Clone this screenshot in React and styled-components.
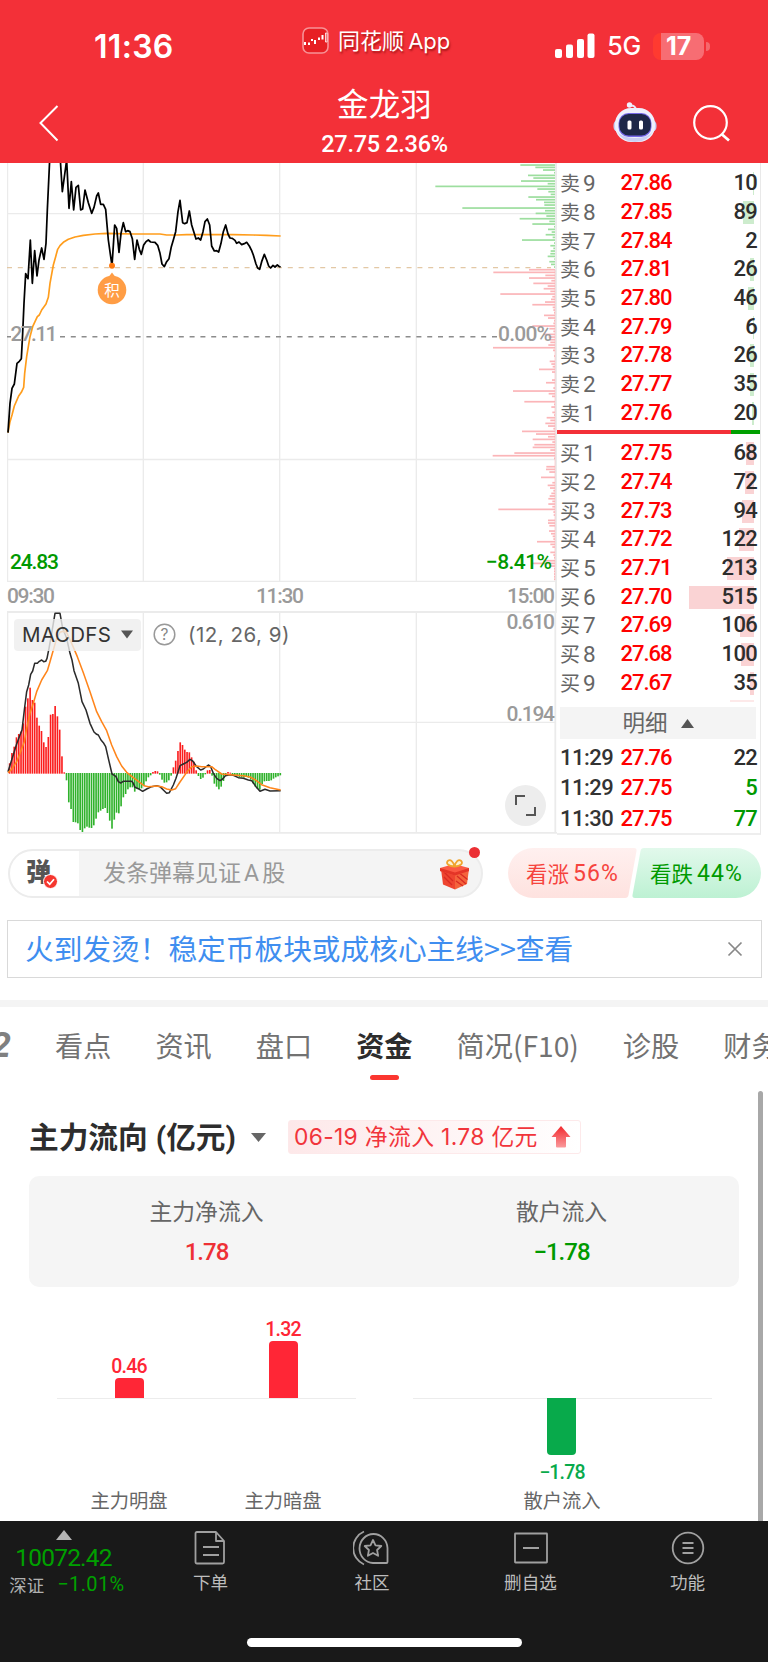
import React from "react";
import styled, { createGlobalStyle } from "styled-components";

const NUM = `Roboto, "Noto Sans CJK SC", sans-serif`;
const UI = `Inter, "Noto Sans CJK SC", sans-serif`;

const Global = createGlobalStyle`
  * { box-sizing: border-box; }
  body { margin: 0; background: #fff; font-family: ${NUM}; color: #333; }
  svg { display: block; flex: none; }
`;

const Page = styled.div`
  width: 768px;
  height: 1662px;
  overflow: hidden;
  display: flex;
  flex-direction: column;
  background: #fff;
  white-space: nowrap;
`;

/* ---------- header ---------- */
const Header = styled.header`
  height: 163px;
  flex: none;
  background: #f33038;
  color: #fff;
  display: flex;
  flex-direction: column;
`;
const StatusBar = styled.div`
  height: 82px;
  padding: 6px 58px 0 94px;
  display: grid;
  grid-template-columns: 207px 1fr auto;
  align-items: center;
`;
const Clock = styled.span`
  font: 600 32px/40px ${UI};
  letter-spacing: 0.3px;
  padding-top: 6px;
`;
const AppTag = styled.div`
  display: flex;
  align-items: center;
  gap: 9px;
  font: 400 22px/30px ${UI};
  word-spacing: -2px;
  padding: 0 0 7px 1px;
  text-shadow: 1px 2px 2px rgba(110, 0, 0, 0.55);
`;
const Signals = styled.div`
  display: flex;
  align-items: center;
  font: 500 25px/30px ${UI};
  padding-top: 4px;
`;
const Network = styled.span`
  margin: 0 12px 0 12px;
  font-weight: 500;
  letter-spacing: -0.2px;
`;
const Battery = styled.div`
  width: 51px;
  height: 27px;
  border-radius: 8px;
  background: linear-gradient(90deg, #ff3a30 0 8px, #f76d73 8px);
  font: 700 25px/26px ${UI};
  padding-left: 13px;
`;
const BatteryTip = styled.i`
  width: 4px;
  height: 9px;
  margin-left: 2px;
  border-radius: 0 5px 5px 0;
  background: #f5686d;
`;
const TitleBar = styled.div`
  height: 81px;
  display: grid;
  grid-template-columns: 240px 1fr 240px;
  padding: 0 37px 0 38px;
`;
const Back = styled.div`padding-top: 22px;`;
const StockTitle = styled.div`
  text-align: center;
  font: 400 31.5px/42px ${NUM};
  padding-top: 3px;
  letter-spacing: 0.2px;
`;
const StockQuote = styled.div`
  font: 500 23.5px/34px ${NUM};
  letter-spacing: -0.3px;
`;
const Tools = styled.div`
  display: flex;
  justify-content: flex-end;
  gap: 36px;
  padding-top: 19px;
`;

/* ---------- charts and order book ---------- */
const Market = styled.section`
  height: 671px;
  flex: none;
  padding: 0 7px;
  display: grid;
  grid-template-columns: 550px 204px;
`;
const Charts = styled.div`
  display: flex;
  flex-direction: column;
`;
const Indicator = styled.div`
  position: relative;
`;
const IndicatorBar = styled.div`
  position: absolute;
  left: 7px;
  top: 7px;
  display: flex;
  align-items: center;
  font: 400 20.5px/33px ${UI};
  color: #666;
`;
const Chip = styled.div`
  width: 127px;
  height: 32px;
  padding-left: 8px;
  display: flex;
  align-items: center;
  gap: 10px;
  border-radius: 4px;
  background: rgba(238, 238, 238, 0.8);
  color: #333;
  letter-spacing: 0.4px;
  margin-right: 12px;
`;
const Params = styled.span`
  margin-left: 12px;
  letter-spacing: 0.5px;
`;
const Expand = styled.div`
  position: absolute;
  right: 11px;
  bottom: 8px;
  width: 41px;
  height: 41px;
  border-radius: 50%;
  background: #ededed;
  display: grid;
  place-items: center;
`;
const Book = styled.div`
  display: flex;
  flex-direction: column;
  border-right: 1px solid #e9e9e9;
  border-bottom: 2px solid #eee;
`;
const Levels = styled.div`
  padding-top: ${(p) => p.$top}px;
  height: ${(p) => p.$h}px;
  flex: none;
`;
const NextLevel = styled.div`
  width: 24px;
  height: 2px;
  margin: 3px 6px 0 auto;
  background: #fde9e9;
`;
const Level = styled.div`
  height: 28.67px;
  display: grid;
  grid-template-columns: 60.5px 70px 1fr;
  align-items: center;
  padding-left: 3px;
  padding-right: 3px;
  font: 500 22px/28px ${NUM};
`;
const Side = styled.span`
  display: flex;
  gap: 3px;
  align-items: center;
  color: #666;
  font: 400 20px/26px "Noto Sans CJK SC", sans-serif;
  b { font: 400 22.5px/28px ${NUM}; }
`;
const Price = styled.span`
  color: #ff0000;
  letter-spacing: -1px;
`;
const Qty = styled.span`
  position: relative;
  text-align: right;
  letter-spacing: -0.7px;
  color: ${(p) => p.$c || "#2d2d2d"};
`;
const QtyText = styled.span`position: relative;`;
const QtyBar = styled.i`
  position: absolute;
  right: 3px;
  top: 3px;
  height: 23px;
  background: ${(p) => (p.$buy ? "#fad3d4" : "#cdeccd")};
`;
const Ratio = styled.div`
  height: 4px;
  flex: none;
  background: linear-gradient(90deg, #f33038 0 174px, #00a000 174px);
`;
const Detail = styled.div`
  height: 32px;
  flex: none;
  margin: 0 4px 0 3px;
  background: #f4f4f4;
  color: #666;
  font: 400 22.5px/32px ${NUM};
  display: flex;
  justify-content: center;
  align-items: center;
  gap: 13px;
`;
const Trade = styled(Level)`
  height: 30.3px;
`;
const TradeTime = styled.span`letter-spacing: -0.5px;`;

/* ---------- comments and vote ---------- */
const Social = styled.section`
  height: 50px;
  flex: none;
  margin: 14px 7px 0 8px;
  display: flex;
  justify-content: space-between;
`;
const Barrage = styled.div`
  position: relative;
  width: 475px;
  height: 49px;
  margin-top: 1px;
  border: 2px solid #ececec;
  border-radius: 25px;
  background: linear-gradient(90deg, #fff 0 69px, #f4f4f4 69px);
  display: flex;
  align-items: center;
  color: #999;
  font: 400 23px/45px ${NUM};
  word-spacing: -2.6px;
`;
const BarrageLogo = styled.div`
  position: relative;
  width: 93px;
  height: 45px;
  padding-left: 16px;
  color: #555;
  font: 900 25px/39px "Noto Sans CJK SC", sans-serif;
  svg { position: absolute; left: 33px; top: 23px; }
`;
const Gift = styled.div`
  position: absolute;
  right: 10px;
  top: 7px;
`;
const Dot = styled.i`
  position: absolute;
  right: 1px;
  top: -4px;
  width: 11px;
  height: 11px;
  border-radius: 50%;
  background: #eb2f34;
`;
const Vote = styled.div`
  position: relative;
  width: 253px;
  display: flex;
`;
const VoteShape = styled.svg`
  position: absolute;
  inset: 0;
`;
const VoteSide = styled.span`
  position: relative;
  flex: none;
  width: ${(p) => p.$w}px;
  padding-left: 18px;
  display: flex;
  gap: 4px;
  font: 400 21.5px/49px "Noto Sans CJK SC", sans-serif;
  color: ${(p) => p.$c};
  b { font: 400 23px/52px ${NUM}; letter-spacing: 1.1px; }
`;

/* ---------- news ---------- */
const News = styled.section`
  height: 58px;
  flex: none;
  margin: 22px 6px 0 7px;
  padding: 0 18px 2px 17px;
  border: 1px solid #d9d9d9;
  display: flex;
  justify-content: space-between;
  align-items: center;
  color: #3f8ef0;
  font: 400 28.7px/52px "Noto Sans CJK SC", sans-serif;
  svg { margin-top: 2px; }
`;
const Band = styled.div`
  height: 7px;
  flex: none;
  margin-top: 22px;
  background: #f4f4f4;
`;

/* ---------- tabs ---------- */
const Tabs = styled.nav`
  height: 81px;
  flex: none;
  display: flex;
  margin-left: -13px;
  padding-top: 19px;
  gap: 44px;
  overflow: hidden;
`;
const Tab = styled.span`
  flex: none;
  font: ${(p) => (p.$on ? 700 : 400)} 28.2px/38px "Noto Sans CJK SC", sans-serif;
  color: ${(p) => (p.$on ? "#2d2d2d" : "#727272")};
  display: flex;
  flex-direction: column;
  align-items: center;
  &::after {
    content: "";
    margin-top: 11px;
    width: 29px;
    height: 5px;
    border-radius: 3px;
    background: ${(p) => (p.$on ? "#fb362f" : "transparent")};
  }
`;
const TabMark = styled(Tab)`
  width: 24px;
  align-items: flex-end;
  font: italic 700 34px/38px Inter, sans-serif;
  color: #808080;
  &::after { width: 0; }
`;

/* ---------- capital flow ---------- */
const Flow = styled.section`
  position: relative;
  height: 433px;
  flex: none;
  padding: 28px 29px 0;
`;
const Scroll = styled.i`
  position: absolute;
  right: 5px;
  top: 3px;
  bottom: 0;
  width: 5px;
  border-radius: 3px 3px 0 0;
  background: #a8a8a8;
`;
const FlowHead = styled.div`
  height: 42px;
  display: flex;
  align-items: center;
  font: 700 29.7px/43px ${NUM};
  color: #2d2d2d;
`;
const Unit = styled.span`margin-left: 8px;`;
const FlowTag = styled.div`
  display: flex;
  align-items: center;
  width: 293px;
  height: 34px;
  padding-left: 5px;
  padding-right: 9px;
  justify-content: space-between;
  border: 1px solid #fde9ea;
  border-radius: 3px;
  background: linear-gradient(90deg, #fde8e9, #fff);
  color: #f1343b;
  font: 400 22.8px/32px ${UI};
  letter-spacing: 0.35px;
`;
const Summary = styled.div`
  height: 111px;
  margin-top: 18px;
  border-radius: 10px;
  background: #f5f5f5;
  display: grid;
  grid-template-columns: 1fr 1fr;
  text-align: center;
  padding-top: 20px;
`;
const SumLabel = styled.div`
  color: #666;
  font: 400 22.8px/33px ${NUM};
`;
const SumValue = styled.div`
  margin-top: 7px;
  font: 500 24px/32px ${NUM};
  letter-spacing: -1px;
  color: ${(p) => p.$c};
`;
const FlowCharts = styled.div`
  display: flex;
  justify-content: space-between;
  padding: 0 27.5px;
`;
const BarGroup = styled.div`
  width: 299px;
  display: flex;
  justify-content: center;
  gap: ${(p) => p.$gap || 0}px;
  background: linear-gradient(#ececec, #ececec) 0 111px / 100% 1px no-repeat;
`;
const BarItem = styled.div`
  width: 80px;
  height: 228px;
  display: grid;
  grid-template-rows: 111px 87px 30px;
  justify-items: center;
  color: #666;
  font: 400 19.3px/30px "Noto Sans CJK SC", sans-serif;
`;
const Half = styled.div`
  display: flex;
  flex-direction: column;
  align-items: center;
  justify-content: ${(p) => (p.$up ? "flex-end" : "flex-start")};
`;
const FlowBar = styled.i`
  width: 29px;
  border-radius: ${(p) => (p.$up ? "4px 4px 0 0" : "0 0 4px 4px")};
  background: ${(p) => (p.$up ? "#ff2636" : "#08aa4b")};
`;
const BarValue = styled.span`
  font: 500 19.5px/24px ${NUM};
  letter-spacing: -0.8px;
  margin: ${(p) => (p.$up ? "0 0 -1px" : "6px 0 0")};
  color: ${(p) => (p.$up ? "#ff2636" : "#08aa4b")};
`;

/* ---------- footer ---------- */
const Footer = styled.footer`
  flex: 1;
  background: #191919;
  display: flex;
  flex-direction: column;
  align-items: center;
`;
const NavRow = styled.div`
  height: 117px;
  width: 768px;
  padding-top: 9px;
  display: grid;
  grid-template-columns: 131px 159px 164px 153px 161px;
`;
const Index = styled.div`
  display: flex;
  flex-direction: column;
  align-items: center;
  padding-right: 4px;
  color: #00a000;
  font: 400 24.5px/26px ${NUM};
`;
const IndexValue = styled.span`
  margin-top: 5px;
  letter-spacing: -0.8px;
`;
const IndexLine = styled.span`
  display: flex;
  gap: 13px;
  margin: 0 -7px 0 0;
  font: 400 20px/26px ${NUM};
  letter-spacing: 0.4px;
  em { font: 400 17.4px/28px "Noto Sans CJK SC", sans-serif; letter-spacing: 0; color: #b0b0b0; }
`;
const NavItem = styled.div`
  display: flex;
  flex-direction: column;
  align-items: center;
  gap: 3px;
  color: #bdbdbd;
  font: 400 17.6px/26px "Noto Sans CJK SC", sans-serif;
`;
const Home = styled.i`
  width: 275px;
  height: 9px;
  border-radius: 5px;
  background: #fff;
`;

/* ---------- data ---------- */
const SELL = [["9", "27.86", 10, 1], ["8", "27.85", 89, 11], ["7", "27.84", 2, 0], ["6", "27.81", 26, 4], ["5", "27.80", 46, 6], ["4", "27.79", 6, 1], ["3", "27.78", 26, 4], ["2", "27.77", 35, 4], ["1", "27.76", 20, 2]];
const BUY = [["1", "27.75", 68, 8], ["2", "27.74", 72, 9], ["3", "27.73", 94, 12], ["4", "27.72", 122, 15], ["5", "27.71", 213, 27], ["6", "27.70", 515, 65], ["7", "27.69", 106, 14], ["8", "27.68", 100, 13], ["9", "27.67", 35, 4]];
const TRADES = [["11:29", "27.76", 22, "#2d2d2d"], ["11:29", "27.75", 5, "#009900"], ["11:30", "27.75", 77, "#009900"]];

const PRICE = "24,818 28,760 30,730 36,685 43,672 51,610 58,604 64,596 68,520 72,430 77,341 84,356 91,240 97,370 104,272 111,348 117,300 125,264 132,298 138,250 142,150 149,0 181,0 187,95 200,0 207,145 214,65 221,150 228,82 235,76 242,150 248,147 255,90 265,128 275,160 282,142 290,108 295,99 302,133 310,133 317,148 325,240 336,318 344,195 350,205 357,277 363,220 370,188 377,215 383,212 390,215 397,236 404,298 411,240 418,268 424,283 431,255 438,245 445,240 452,246 465,247 473,256 480,280 486,312 493,320 500,305 507,296 514,260 520,240 527,215 534,155 540,121 548,188 554,191 561,188 568,153 575,195 588,237 595,234 602,240 609,215 615,185 622,177 629,195 635,258 643,273 650,272 656,276 663,250 670,215 677,195 684,222 690,234 697,235 705,241 710,250 717,246 725,254 735,250 740,247 748,258 755,272 760,285 768,312 773,324 779,328 785,305 793,283 800,300 806,318 812,324 819,316 825,321 832,315 838,320 842,321";
const AVG = "24,818 30,785 36,765 43,738 50,722 56,708 64,697 71,682 74,640 80,590 90,530 98,500 105,485 112,470 118,465 125,450 138,432 145,412 150,370 160,315 167,290 173,268 180,257 190,247 205,238 225,231 250,226 285,222 320,220 350,221 400,222 480,222 500,225 530,225 560,224 700,224 760,225 800,226 842,228";
const DEPTH = "15:721 22:766 30:789 38:822 46:744 54:760 63:723 71:803 79:466 87:772 95:805 103:812 111:745 119:768 127:792 135:793 144:547 152:795 160:767 168:799 176:719 184:808 192:757 200:822 208:804 216:815 224:797 232:818 240:726 249:822 257:811 265:820 273:812 281:811 289:803 297:823 305:808 313:813 321:822 329:747 337:640 346:796 354:747 362:814 370:760 378:803 386:791 394:811 402:661 410:817 418:813 426:795 434:757 442:818 450:820 458:822 466:792 474:804 482:822 490:820 498:757 506:808 514:820 523:790 531:806 539:809 547:811 555:805 563:639 571:819 588:822 604:809 612:814 620:818 628:777 636:816 660:816 668:798 684:820 693:699 701:806 709:816 725:733 733:822 741:814 757:817 765:822 773:800 781:811 790:796 798:804 806:820 814:726 822:768 830:804 838:758 846:817 854:763 862:758 870:811 879:703 887:638 895:822 920:799 928:798 936:808 952:783 968:817 976:803 984:810 992:820 1000:814 1008:809 1016:805 1024:817 1032:805 1040:817 1048:655 1056:820 1065:821 1081:804 1089:804 1097:808 1113:807 1121:813 1129:818 1137:820 1145:771 1153:811 1161:817 1177:811 1185:820 1193:822 1202:790 1210:756 1218:812 1226:822 1234:822 1242:822 1250:822 1258:822"
  .split(" ").map((s) => s.split(":").map(Number));
const HIST = [490, 459, 440, 412, 402, 395, 370, 320, 295, 263, 300, 308, 353, 377, 393, 427, 441, 411, 344, 342, 318, 349, 389, 469, 517, 539, 605, 625, 664, 665, 668, 688, 694, 683, 678, 681, 682, 674, 654, 635, 630, 625, 622, 637, 660, 684, 657, 636, 638, 617, 590, 580, 566, 560, 560, 573, 563, 566, 563, 556, 542, 530, 524, 516, 513, 514, 522, 537, 546, 545, 539, 525, 502, 482, 453, 427, 435, 449, 456, 457, 472, 485, 511, 526, 535, 531, 521, 511, 510, 525, 549, 558, 566, 558, 541, 522, 516, 518, 523, 525, 527, 530, 530, 531, 529, 531, 537, 548, 558, 565, 567, 550, 542, 541, 541, 539, 534, 530, 527, 524];
const DIF = "24,515 35,480 50,432 60,405 66,390 73,330 80,275 86,255 92,223 98,213 104,190 112,190 118,184 125,180 131,185 137,184 141,175 147,145 155,100 165,40 180,40 188,85 200,115 210,160 216,180 222,212 235,250 246,305 258,330 270,370 282,396 290,403 295,405 303,420 310,428 317,440 325,475 336,522 343,526 348,530 355,545 362,549 370,544 395,544 400,550 405,562 415,566 428,574 440,567 455,560 470,557 480,560 490,570 500,580 508,578 520,555 528,535 540,497 550,492 560,487 570,478 578,483 590,500 602,510 610,507 625,495 632,500 640,520 650,535 660,542 668,537 676,527 690,524 700,526 715,533 730,535 745,540 755,542 768,560 780,574 795,568 810,573 842,572";
const DEA = "24,518 35,508 50,485 60,460 73,425 80,385 90,340 100,310 110,275 125,240 142,212 150,185 160,150 170,115 180,97 190,94 200,98 215,130 232,170 250,218 270,275 290,335 305,365 320,392 335,435 350,470 365,498 380,517 400,533 420,548 432,557 445,560 470,558 485,560 500,567 515,570 527,566 540,546 560,517 575,500 590,498 605,500 635,500 645,508 665,522 690,524 730,527 750,531 765,539 785,554 810,563 842,570";

const AxisText = styled.text`
  font: 500 21px ${NUM};
  fill: ${(p) => p.$c || "#9a9a9a"};
`;

function PriceChart() {
  return (
    <svg width="550" height="448" viewBox="7 163 550 448">
      <g stroke="#ebebeb" strokeWidth="1.3" fill="none">
        <path d="M143.3 163V581M279.7 163V581M416.3 163V581M7 213.7H555M7 459.5H555M7 581.3H557" />
        <path d="M7.3 163V581" strokeWidth="1.8" />
        <path d="M556 163V611" strokeWidth="2" />
      </g>
      {DEPTH.map(([y, x]) => (
        <rect key={y} x={280 + x / 3} y={160 + y / 3 - 0.8} width={(825 - x) / 3} height="1.7" fill={y < 325 ? "#9dde9f" : "#fbb5b8"} />
      ))}
      <path d="M555 270V580" stroke="#fbb5b8" strokeWidth="0.6" />
      <path d="M7 267.7H551" stroke="#e3c8a5" strokeWidth="1.3" strokeDasharray="5 5.8" />
      <path d="M7 336.7H11M60 336.7H497" stroke="#8c8c8c" strokeWidth="1.4" strokeDasharray="5 5.8" />
      <g transform="translate(0 160) scale(.33333)" fill="none" strokeLinejoin="round">
        <polyline points={AVG} stroke="#ff9d1c" strokeWidth="5" />
        <polyline points={PRICE} stroke="#000" strokeWidth="5.2" />
      </g>
      <circle cx="112" cy="265.8" r="3" fill="#ff7a10" />
      <path d="M112 272.5l3.8 5h-7.6z" fill="#ff9d45" />
      <circle cx="112" cy="290" r="14.3" fill="#ff9d45" />
      <text x="112" y="295.7" textAnchor="middle" fill="#fff" fontSize="15.5" fontFamily="Noto Sans CJK SC, sans-serif">积</text>
      <AxisText x="10.5" y="340.5" textLength="47">27.11</AxisText>
      <AxisText x="498" y="340.5" textLength="54">0.00%</AxisText>
      <AxisText x="10" y="569" textLength="49" $c="#009900">24.83</AxisText>
      <AxisText x="486" y="569" textLength="66" $c="#009900">−8.41%</AxisText>
      <AxisText x="7" y="602.7" textLength="48">09:30</AxisText>
      <AxisText x="256" y="602.7" textLength="48">11:30</AxisText>
      <AxisText x="507" y="602.7" textLength="48">15:00</AxisText>
    </svg>
  );
}

function MacdChart() {
  const step = 812 / (HIST.length - 1);
  return (
    <svg width="550" height="223" viewBox="7 611 550 223">
      <g stroke="#ebebeb" strokeWidth="1.3" fill="none">
        <path d="M143.3 612V833M279.7 612V833M416.3 612V833M7 722.4H555" />
        <path d="M557 612H7.4V832.8H557M555.3 612V833" strokeWidth="1.8" />
      </g>
      <g transform="translate(0 600) scale(.33333)" fill="none" strokeLinejoin="round">
        {HIST.map((v, i) => (
          <rect key={i} x={26.5 + i * step} width="4.9" y={Math.min(v, 519)} height={Math.abs(v - 519) + 2} fill={v < 519 ? "#fb1d1d" : "#2fb22b"} />
        ))}
        <polyline points={DIF} stroke="#2b2b2b" strokeWidth="4.6" />
        <polyline points={DEA} stroke="#ff851b" strokeWidth="4.6" />
      </g>
      <AxisText x="506.5" y="629.3" textLength="48.5">0.610</AxisText>
      <AxisText x="506.5" y="721" textLength="48.5">0.194</AxisText>
    </svg>
  );
}

const AppIcon = () => (
  <svg width="27" height="27" viewBox="0 0 27 27">
    <rect x="1" y="1" width="25" height="25" rx="6" fill="#e71f24" stroke="#f79296" strokeWidth="1.6" />
    <path d="M3 15v3M7 15.5v2.5M10 12v2M13 13v4M17 10.5v2.5M20.500 8v4.500" stroke="#fff" strokeWidth="2" />
    <path d="M23.500 6v9h1.500V6z" fill="none" stroke="#fff" strokeWidth=".8" />
  </svg>
);
const Robot = () => (
  <svg width="44" height="42" viewBox="0 0 44 42">
    <path d="M17 4.500q5-.5 6 4" stroke="#e9eafa" strokeWidth="2" fill="none" />
    <circle cx="16.500" cy="4" r="2.700" fill="#f0f2ff" />
    <rect x="0.500" y="19" width="43" height="12" rx="5" fill="#c8cdf5" />
    <rect x="2" y="7" width="40" height="34" rx="16" fill="#eef0fd" />
    <path d="M4 30q5 11 18 11t18-11q-4 7-18 7T4 30z" fill="#c9cff3" />
    <rect x="5.500" y="12" width="33" height="24" rx="10" fill="#7568e8" />
    <rect x="6.300" y="13" width="31.500" height="21.500" rx="9.500" fill="#1d2748" />
    <rect x="14.500" y="19.500" width="4" height="9" rx="1.500" fill="#fff" />
    <rect x="26" y="19.500" width="4" height="9" rx="1.500" fill="#fff" />
  </svg>
);
const GiftIcon = () => (
  <svg width="32" height="32" viewBox="0 0 32 32">
    <path d="M2 11l14 6v14.500L4 26.500z" fill="#ee4530" />
    <path d="M30 11l-14 6v14.500L28 26z" fill="#f4643c" />
    <path d="M18 18l9 8M17 23l7 5M21 15.500l7.500 6M5 14l9 9M5 19l8 8" stroke="#d92a22" strokeWidth="1.300" />
    <path d="M1 10l14-4 15 4v3l-14 4.500L1 13z" fill="#fb5a44" />
    <path d="M1 10l15 4.500L30 10v3l-14 4.500L1 13z" fill="#e43527" />
    <path d="M15.500 8.500C9 8.500 6.500 5 9 2.800S14.500 4 15.500 8.500zM15.500 8.500c6.500 0 9-3.500 6.500-5.700S16.500 4 15.500 8.500z" fill="#fff3d0" stroke="#f0a52e" strokeWidth="1.800" />
  </svg>
);

const NavIcon = styled.svg.attrs({ width: 38, height: 36, viewBox: "0 0 38 36" })`
  fill: none;
  stroke: #a0a0a0;
  stroke-width: 1.8;
  stroke-linejoin: round;
`;

const NAV = [
  ["下单", <path key="a" d="M5 2h19l8 9v21q0 1.500-1.500 1.500H5q-1.500 0-1.500-1.500V3.500Q3.500 2 5 2zM24 2v9h8M11 17h16M11 25h16" />],
  ["社区", <g key="b"><path d="M11 1.500A18 18 0 0 0 11 34.500M34.500 32V18A14 14.500 0 1 0 20 33h13.500q1 0 1-1z" /><path d="M20 10l2.500 5.300 5.800.7-4.200 4 1 5.800-5.100-2.800-5.100 2.800 1-5.800-4.200-4 5.800-.7z" /></g>],
  ["删自选", <path key="c" d="M3.500 3.500h31q.500 0 .5.500v28q0 .500-.5.500h-31q-.5 0-.5-.5v-28q0-.5.5-.5zM11 18h16" />],
  ["功能", <g key="d"><circle cx="19" cy="18" r="15.300" /><path d="M13.500 13h11M13.500 18h11M13.500 23h11" /></g>],
];

const SideRows = ({ side, rows }) =>
  rows.map(([n, price, qty, w]) => (
    <Level key={n}>
      <Side>{side}<b>{n}</b></Side>
      <Price>{price}</Price>
      <Qty>
        <QtyBar $buy={side === "买"} style={{ width: w }} />
        <QtyText>{qty}</QtyText>
      </Qty>
    </Level>
  ));

const Bar = ({ value, height, label, up }) => (
  <BarItem>
    <Half $up>{up && <><BarValue $up>{value}</BarValue><FlowBar $up style={{ height }} /></>}</Half>
    <Half>{!up && <><FlowBar style={{ height }} /><BarValue>{value}</BarValue></>}</Half>
    {label}
  </BarItem>
);

export default function App() {
  return (
    <Page>
      <Global />
      <Header>
        <StatusBar>
          <Clock>11:36</Clock>
          <AppTag><AppIcon />同花顺 App</AppTag>
          <Signals>
            <svg width="40" height="26" viewBox="0 0 40 26" fill="#fff">
              <rect x="0" y="16" width="7" height="9" rx="2" /><rect x="11" y="11.500" width="7" height="13.500" rx="2" />
              <rect x="22" y="6" width="7" height="19" rx="2" /><rect x="32.500" y="0.500" width="7" height="24.500" rx="2" />
            </svg>
            <Network>5G</Network>
            <Battery>17</Battery>
            <BatteryTip />
          </Signals>
        </StatusBar>
        <TitleBar>
          <Back>
            <svg width="22" height="38" viewBox="0 0 22 38" fill="none" stroke="#fff" strokeWidth="2"><path d="M19.500 2L2.500 19l17 17.500" /></svg>
          </Back>
          <StockTitle>金龙羽<StockQuote>27.75 2.36%</StockQuote></StockTitle>
          <Tools>
            <Robot />
            <svg width="38" height="42" viewBox="0 0 38 42" fill="none" stroke="#fff" strokeWidth="2.200"><circle cx="17.500" cy="21.500" r="16.300" /><path d="M28.500 33l7.500 6.500" strokeWidth="2.800" /></svg>
          </Tools>
        </TitleBar>
      </Header>

      <Market>
        <Charts>
          <PriceChart />
          <Indicator>
            <MacdChart />
            <IndicatorBar>
              <Chip>MACDFS<svg width="12" height="9" viewBox="0 0 12 9"><path d="M0 .5h12L6 8.500z" fill="#555" /></svg></Chip>
              <svg width="23" height="23" viewBox="0 0 23 23"><circle cx="11.500" cy="11.500" r="10.300" fill="none" stroke="#999" strokeWidth="1.500" /><text x="11.500" y="17" textAnchor="middle" fontSize="15.500" fill="#888" fontFamily="Inter, sans-serif">?</text></svg>
              <Params>(12, 26, 9)</Params>
            </IndicatorBar>
            <Expand>
              <svg width="23" height="23" viewBox="0 0 23 23" fill="none" stroke="#555" strokeWidth="2"><path d="M2 11V2h9M21 13v8h-9" /></svg>
            </Expand>
          </Indicator>
        </Charts>
        <Book>
          <Levels $top={6} $h={267}><SideRows side="卖" rows={SELL} /></Levels>
          <Ratio />
          <Levels $top={5} $h={273}><SideRows side="买" rows={BUY} /><NextLevel /></Levels>
          <Detail>明细<svg width="13" height="9" viewBox="0 0 13 9"><path d="M0 9h13L6.500 0z" fill="#555" /></svg></Detail>
          <Levels $top={4} $h={94}>
            {TRADES.map(([t, p, q, c], i) => (
              <Trade key={i}><TradeTime>{t}</TradeTime><Price>{p}</Price><Qty $c={c}>{q}</Qty></Trade>
            ))}
          </Levels>
        </Book>
      </Market>

      <Social>
        <Barrage>
          <BarrageLogo>弹<svg width="15" height="15" viewBox="0 0 15 15"><circle cx="7.500" cy="7.500" r="7" fill="#f5362e" stroke="#fff" /><path d="M4 7.500l2.700 2.700L11 5.300" fill="none" stroke="#fff" strokeWidth="1.700" /></svg></BarrageLogo>
          发条弹幕见证 A 股
          <Gift><GiftIcon /></Gift>
          <Dot />
        </Barrage>
        <Vote>
          <VoteShape width="253" height="50" viewBox="0 0 253 50">
            <defs>
              <linearGradient id="up" x2="0" y2="1"><stop stopColor="#fff0ef" /><stop offset="1" stopColor="#fee2df" /></linearGradient>
              <linearGradient id="down" x2="0" y2="1"><stop stopColor="#e2f9ec" /><stop offset="1" stopColor="#bdf1d3" /></linearGradient>
            </defs>
            <path d="M25 0H126q3 0 2.500 3l-8 44q-.5 3-3.500 3H25A25 25 0 0 1 25 0z" fill="url(#up)" />
            <path d="M228 0H136q-3 0-3.500 3l-8 44q-.5 3 2.500 3H228A25 25 0 0 0 228 0z" fill="url(#down)" />
          </VoteShape>
          <VoteSide $w={124} $c="#f6433d">看涨<b>56%</b></VoteSide>
          <VoteSide $w={129} $c="#009a00">看跌<b>44%</b></VoteSide>
        </Vote>
      </Social>

      <News>
        火到发烫！稳定币板块或成核心主线&gt;&gt;查看
        <svg width="16" height="16" viewBox="0 0 16 16" stroke="#888" strokeWidth="1.700"><path d="M1.500 1.500l13 13M14.500 1.500l-13 13" /></svg>
      </News>
      <Band />

      <Tabs>
        <TabMark>2</TabMark>
        <Tab>看点</Tab>
        <Tab>资讯</Tab>
        <Tab>盘口</Tab>
        <Tab $on>资金</Tab>
        <Tab>简况(F10)</Tab>
        <Tab>诊股</Tab>
        <Tab>财务</Tab>
      </Tabs>

      <Flow>
        <Scroll />
        <FlowHead>
          主力流向<Unit>(亿元)</Unit>
          <svg width="15" height="9" viewBox="0 0 15 9" style={{ margin: "0 22px 0 15px" }}><path d="M0 0h15L7.500 9z" fill="#666" /></svg>
          <FlowTag>
            06-19 净流入 1.78 亿元
            <svg width="20" height="22" viewBox="0 0 20 22">
              <defs><linearGradient id="rise" x2="0" y2="1"><stop stopColor="#f2282d" /><stop offset="1" stopColor="#fa9a9c" /></linearGradient></defs>
              <path d="M10 0l9.500 11H15v9.500q0 1-1 1H6q-1 0-1-1V11H.5z" fill="url(#rise)" />
            </svg>
          </FlowTag>
        </FlowHead>
        <Summary>
          <div><SumLabel>主力净流入</SumLabel><SumValue $c="#ee3035">1.78</SumValue></div>
          <div><SumLabel>散户流入</SumLabel><SumValue $c="#009a00">−1.78</SumValue></div>
        </Summary>
        <FlowCharts>
          <BarGroup $gap={74}>
            <Bar up value="0.46" height={20} label="主力明盘" />
            <Bar up value="1.32" height={57} label="主力暗盘" />
          </BarGroup>
          <BarGroup>
            <Bar value="−1.78" height={57} label="散户流入" />
          </BarGroup>
        </FlowCharts>
      </Flow>

      <Footer>
        <NavRow>
          <Index>
            <svg width="16" height="10" viewBox="0 0 16 10"><path d="M0 10h16L8 0z" fill="#b5b5b5" /></svg>
            <IndexValue>10072.42</IndexValue>
            <IndexLine><em>深证</em>−1.01%</IndexLine>
          </Index>
          {NAV.map(([label, icon]) => (
            <NavItem key={label}><NavIcon>{icon}</NavIcon>{label}</NavItem>
          ))}
        </NavRow>
        <Home />
      </Footer>
    </Page>
  );
}
